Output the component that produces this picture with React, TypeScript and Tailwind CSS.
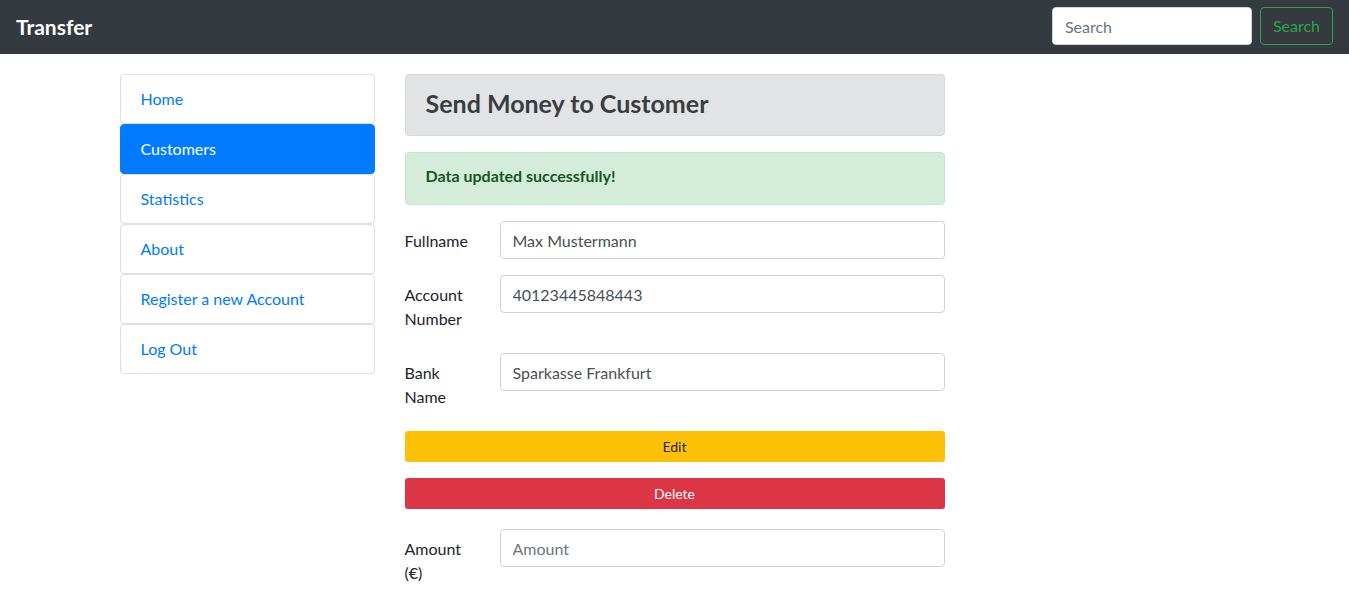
import React from 'react';

const navItems = [
  { name: 'Home', active: false },
  { name: 'Customers', active: true },
  { name: 'Statistics', active: false },
  { name: 'About', active: false },
  { name: 'Register a new Account', active: false },
  { name: 'Log Out', active: false },
];

function FieldRow({ label, value, placeholder }: { label: React.ReactNode; value?: string; placeholder?: string }) {
  return (
    <div className="flex mb-4">
      <label className="w-[95px] shrink-0 pt-[8px] pb-[6px] leading-6 text-[#212529]">{label}</label>
      <input
        readOnly={value !== undefined}
        defaultValue={value}
        placeholder={placeholder}
        className="flex-1 h-[38px] px-3 py-[6px] border border-[#ced4da] rounded-[4px] text-[#495057] placeholder:text-[#6c757d] outline-none bg-white"
      />
    </div>
  );
}

export default function App() {
  return (
    <div className="min-h-screen bg-white text-[#212529] text-base leading-6" style={{ fontFamily: 'Lato, "Open Sans", sans-serif' }}>
      <nav className="h-[54px] bg-[#343a40] flex items-center justify-between px-4">
        <span className="text-[21px] font-bold text-white leading-[30px]">Transfer</span>
        <div className="flex items-center gap-2 -mt-[2px]">
          <input
            placeholder="Search"
            className="w-[200px] h-[38px] px-3 bg-white rounded-[4px] border border-[#ced4da] text-[#495057] placeholder:text-[#6c757d] outline-none"
          />
          <button className="h-[38px] px-3 border border-[#28a745] text-[#28a745] rounded-[4px]">Search</button>
        </div>
      </nav>

      <div className="w-[1140px] mx-auto flex mt-5">
        <div className="w-[285px] px-[15px]">
          <div className="flex flex-col">
            {navItems.map((item) => (
              <a
                key={item.name}
                className={`h-[50px] px-5 flex items-center border rounded-[4px] ${
                  item.active ? 'bg-[#007bff] border-[#007bff] text-white' : 'bg-white border-[#dfdfdf] text-[#007bff]'
                }`}
              >
                {item.name}
              </a>
            ))}
          </div>
        </div>

        <div className="w-[570px] px-[15px]">
          <div className="bg-[#e2e3e5] border border-[#d6d8db] rounded-[4px] px-5 h-[62px] flex items-center pb-[4px] mb-4">
            <h3 className="text-[25px] font-bold text-[#383d41] leading-[30px]">Send Money to Customer</h3>
          </div>
          <div className="bg-[#d4edda] border border-[#c3e6cb] rounded-[4px] px-5 h-[53px] flex items-center pb-[5px] mb-4">
            <span className="font-bold text-[#155724]">Data updated successfully!</span>
          </div>

          <FieldRow label="Fullname" value="Max Mustermann" />
          <FieldRow label={<>Account<br />Number</>} value="40123445848443" />
          <FieldRow label={<>Bank<br />Name</>} value="Sparkasse Frankfurt" />

          <button className="w-full h-[31px] bg-[#ffc107] text-[#212529] text-sm rounded-[3px] mb-4">Edit</button>
          <button className="w-full h-[31px] bg-[#dc3545] text-white text-sm rounded-[3px] mb-5">Delete</button>

          <FieldRow label={<>Amount<br />(€)</>} placeholder="Amount" />
        </div>
      </div>
    </div>
  );
}
